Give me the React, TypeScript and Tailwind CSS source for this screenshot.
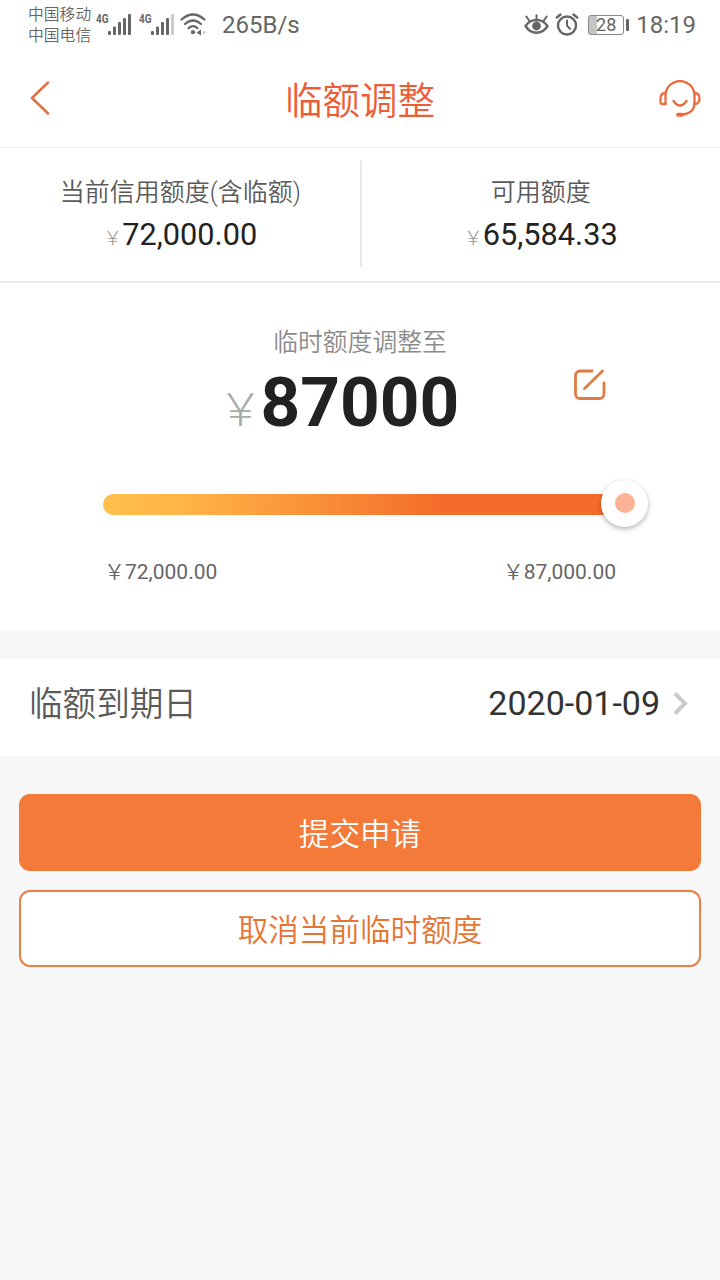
import { useState } from 'react';

interface AmountProps {
  label: string;
  value: string;
}

const YEN = '\uFFE5';
const MIN_LIMIT = 72000;
const MAX_LIMIT = 87000;

function formatAmount(n: number) {
  return n.toLocaleString('en-US', { minimumFractionDigits: 2 });
}

function SignalIcon({ weak }: { weak?: boolean }) {
  return (
    <svg width="38" height="26" viewBox="0 0 38 26" fill="#666">
      <text x="0" y="11" fontSize="12" fontWeight="700" textLength="12.5" lengthAdjust="spacingAndGlyphs">4G</text>
      <rect x="12" y="19" width="3" height="4" rx="1" />
      <rect x="17" y="14.5" width="3" height="8.5" rx="1" />
      <rect x="22" y="10" width="3" height="13" rx="1" />
      <rect x="27" y="6" width="3" height="17" rx="1" />
      <rect x="32" y="2" width="3" height="21" rx="1" fill={weak ? '#ccc' : '#666'} />
    </svg>
  );
}

function WifiIcon() {
  return (
    <svg width="28" height="24" viewBox="0 0 28 24" fill="none" stroke="#666" strokeWidth="2.2" strokeLinecap="round">
      <path d="M1.5 6.5Q13-3.500 24.500 6.500" />
      <path d="M5 11q8-7 16 0" />
      <path d="M8.500 15.200q4.500-4 9 0" />
      <circle cx="13" cy="19.200" r="2.100" fill="#666" stroke="none" />
      <path d="m21 16.500-4.500 3 4.500 3z" fill="#666" stroke="none" />
      <path d="m23 17.500 3 2-3 2z" fill="#ccc" stroke="none" />
    </svg>
  );
}

function EyeIcon() {
  return (
    <svg width="25" height="22" viewBox="0 0 25 22" fill="none" stroke="#666" strokeWidth="2.400" strokeLinecap="round">
      <path d="M1.500 12C7 4 18 4 23.500 12C18 21 7 21 1.500 12Z" strokeLinejoin="round" />
      <circle cx="12.500" cy="12" r="4.400" fill="#666" stroke="none" />
      <path d="M12.500 1.200v4M2.300 2.500l3.200 4.500M22.700 2.500l-3.200 4.500" strokeWidth="2" />
    </svg>
  );
}

function AlarmIcon() {
  return (
    <svg width="24" height="24" viewBox="0 0 24 24" fill="none" stroke="#666" strokeWidth="2.400" strokeLinecap="round">
      <circle cx="12" cy="12.500" r="9" />
      <path d="M12 7.500v5.200l3 3" strokeWidth="2" />
      <path d="M1.800 4.500 5.500 1.500M22.200 4.500l-3.700-3" />
    </svg>
  );
}

function BatteryIcon() {
  return (
    <div className="flex items-center gap-[2px]">
      <div className="flex h-[20px] w-[36px] rounded-[3px] border-[1.5px] border-[#888] bg-[linear-gradient(90deg,#c4c4c4_26%,transparent_26%)] bg-origin-border p-px">
        <span className="w-full text-center text-[18px] leading-[16px] text-[#666]">28</span>
      </div>
      <div className="h-[12px] w-[3px] rounded-[1px] bg-[#666]" />
    </div>
  );
}

function HeadsetIcon() {
  return (
    <svg width="42" height="38" viewBox="0 0 42 38" fill="none" stroke="#ec6b3d" strokeWidth="2.300" strokeLinecap="round" strokeLinejoin="round">
      <path d="M6.500 24V15.500a14.500 14.500 0 0 1 29 0v7.500c0 7-5 11-12 11.700" />
      <path d="M6.500 13C3.500 13 1.500 15 1.500 18.500V22Q1.500 24 3.500 24H6.500M35.500 13c3 0 5 2 5 5.500S38.500 24 35.500 24" />
      <path d="M14.500 21q6.500 9 13 0" />
      <path d="M19 34.700h4" strokeWidth="4" />
    </svg>
  );
}

function EditIcon() {
  return (
    <svg width="34" height="34" viewBox="0 0 34 34" fill="none" stroke="#e07b43" strokeWidth="2.800" strokeLinecap="round">
      <path d="M19 4H7A4.500 4.500 0 0 0 2.500 8.500v18.500A4.500 4.500 0 0 0 7 31.500H26.500A4.500 4.500 0 0 0 31 27V16" />
      <path d="M11.500 21.500 29.500 4" />
    </svg>
  );
}

function Amount({ label, value }: AmountProps) {
  return (
    <div className="flex flex-1 flex-col items-center pt-[14px]">
      <span className="text-[25px] font-[350] leading-[36px] text-[#5a5a5a]">{label}</span>
      <div className="mt-[4px] flex items-baseline leading-[40px]">
        <span className="w-[19px] text-[19px] font-light text-[#999]">{YEN}</span>
        <span className="text-[30.700px] text-[#222]">{value}</span>
      </div>
    </div>
  );
}

export default function App() {
  const [limit] = useState(MAX_LIMIT);

  return (
    <div className="flex h-[1280px] w-[720px] flex-col overflow-hidden bg-[#f7f7f7] font-[Roboto,'Noto_Sans_CJK_SC',sans-serif]">
      {/* Status bar */}
      <div className="flex h-[50px] items-center bg-white pl-[28px] pr-[24px] text-[24px] text-[#666]">
        <div className="flex w-[68px] flex-col text-[15.800px] font-[350] leading-[21px]">
          <span>中国移动</span>
          <span>中国电信</span>
        </div>
        <div className="flex items-center">
          <SignalIcon />
          <span className="w-[5px]" />
          <SignalIcon weak />
          <span className="w-[3px]" />
          <WifiIcon />
        </div>
        <span className="ml-[14px]">265B/s</span>
        <div className="ml-auto flex items-center">
          <EyeIcon />
          <span className="w-[6px]" />
          <AlarmIcon />
          <span className="w-[9px]" />
          <BatteryIcon />
          <span className="ml-[7px]">18:19</span>
        </div>
      </div>

      {/* Header */}
      <header className="flex h-[98px] items-center border-b border-[#eee] bg-white pl-[30px] pr-[19px]">
        <button className="w-[53px] pb-[2px]">
          <svg width="20" height="34" viewBox="0 0 20 34" fill="none" stroke="#e2703f" strokeWidth="2.500" strokeLinecap="round" strokeLinejoin="round">
            <path d="M18 1.500 2 17l16 15.500" />
          </svg>
        </button>
        <h1 className="flex-1 pr-[22px] pt-[5px] text-center text-[37.500px] font-[350] text-[#ee5c35]">临额调整</h1>
        <button>
          <HeadsetIcon />
        </button>
      </header>

      {/* Current limits */}
      <section className="flex h-[135px] border-b-2 border-[#ececec] bg-white pb-[14px] pl-px pt-[13px]">
        <Amount label="当前信用额度(含临额)" value="72,000.00" />
        <div className="w-[2px] bg-[#e9e9e9]" />
        <Amount label="可用额度" value="65,584.33" />
      </section>

      {/* Limit slider */}
      <section className="flex h-[348px] flex-col bg-white pt-[42px]">
        <p className="text-center text-[24.800px] font-[350] leading-[36px] text-[#8c8c8c]">临时额度调整至</p>
        <div className="flex h-[82px] pl-[218px]">
          <div className="flex w-[355px] items-baseline leading-[84px]">
            <span className="w-[42.500px] text-[45px] font-light text-[#aaa]">{YEN}</span>
            <span className="text-[69.300px] font-bold text-[#222]">{limit}</span>
          </div>
          <button className="h-[34px] pt-[6px]">
            <EditIcon />
          </button>
        </div>
        <div className="mx-[103px] mt-[36px] flex h-[48px] items-center">
          <div className="mt-[2px] h-[21px] w-[522px] shrink-0 rounded-full bg-[linear-gradient(90deg,#ffbf4a_0%,#ffb547_15%,#f46c2a_65%,#f46c2a_100%)]" />
          <div className="-ml-[24px] flex size-[47px] shrink-0 items-center justify-center rounded-full bg-white shadow-[0_2px_5px_rgba(0,0,0,0.3)]">
            <div className="size-[20px] rounded-full bg-[#fab195]" />
          </div>
        </div>
        <div className="mt-[30px] flex justify-between pl-[104px] pr-[104px] text-[21px] leading-[30px] text-[#666]">
          <span><span className="font-[350]">{YEN}</span>{formatAmount(MIN_LIMIT)}</span>
          <span><span className="font-[350]">{YEN}</span>{formatAmount(MAX_LIMIT)}</span>
        </div>
      </section>

      {/* Expiry date */}
      <section className="mt-[28px] flex h-[97px] items-center bg-white pb-[9px] pl-[29px] pr-[32px] text-[34px]">
        <span className="pt-[4px] text-[33.600px] font-[350] text-[#5a5a5a]">临额到期日</span>
        <span className="ml-auto text-[#333]">2020-01-09</span>
        <svg className="ml-[13px]" width="15" height="24" viewBox="0 0 15 24" fill="none" stroke="#ccc" strokeWidth="4">
          <path d="m2 2.500 10 10L2 22.500" />
        </svg>
      </section>

      {/* Actions */}
      <div className="flex flex-col gap-[19px] px-[19px] pt-[38px] text-[30.600px] font-[350]">
        <button className="h-[77px] rounded-[11px] bg-[#f47a3a] pt-[4px] text-white">提交申请</button>
        <button className="h-[77px] rounded-[11px] border-2 border-[#e88048] bg-white pt-[4px] text-[#e67433]">取消当前临时额度</button>
      </div>
    </div>
  );
}
